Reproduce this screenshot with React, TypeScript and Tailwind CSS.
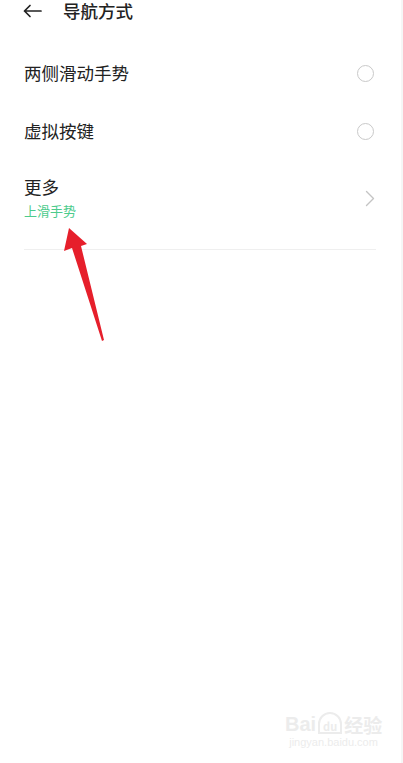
import React from "react";

const FONT = { fontFamily: '"Noto Sans CJK SC", "Noto Sans", sans-serif' };

function Radio() {
  return <span className="mr-[2px] block h-[17px] w-[17px] rounded-full border-[1.5px] border-[#c9c9c9]" />;
}

function Row({ label }: { label: string }) {
  return (
    <div className="flex h-[58px] items-center justify-between">
      <span className="text-[17.5px] leading-[22px] text-[#222]">{label}</span>
      <Radio />
    </div>
  );
}

export default function App() {
  return (
    <div className="relative h-[763px] w-full overflow-hidden bg-white border-r-2 border-[#f6f6f6]" style={FONT}>
      {/* header */}
      <div className="flex h-[22px] items-center pl-[23px]">
        <svg width="19" height="14" viewBox="0 0 19 14" fill="none" stroke="#222" strokeWidth="1.7" strokeLinecap="round" strokeLinejoin="round">
          <path d="M18 7H1.5M7 1.5L1.5 7L7 12.5" />
        </svg>
        <span className="ml-[21px] text-[17.5px] font-medium leading-[22px] text-[#222]">导航方式</span>
      </div>

      {/* list */}
      <div className="mt-[22px] ml-[24px] mr-[25px]">
        <Row label="两侧滑动手势" />
        <Row label="虚拟按键" />
        <div className="flex items-center justify-between border-b border-[#efefef] pt-[16px] pb-[29px]">
          <div className="flex flex-col">
            <span className="text-[17.5px] leading-[22px] text-[#222]">更多</span>
            <span className="mt-[4px] text-[13px] leading-[18px] text-[#4ccb8c]">上滑手势</span>
          </div>
          <svg width="10" height="17" viewBox="0 0 10 17" fill="none" stroke="#c4c4c4" strokeWidth="1.4" strokeLinecap="round" strokeLinejoin="round" className="mr-[1px]">
            <path d="M1.5 1.5L8.5 8.5L1.5 15.5" />
          </svg>
        </div>
      </div>

      {/* annotation arrow */}
      <svg className="absolute left-0 top-0" width="403" height="763" viewBox="0 0 403 763">
        <polygon points="69,228 64,251 72,248 102,341 104,340 81,246 87,244" fill="#e61f2b" />
      </svg>

      {/* watermark */}
      <div className="absolute left-[285px] top-[712px] flex flex-col items-center text-[#ececec]">
        <div className="flex items-end gap-[2px] leading-none">
          <span className="text-[20px] font-bold" style={{ fontFamily: '"Liberation Sans", sans-serif' }}>Bai</span>
          <span className="flex h-[22px] w-[24px] items-end justify-center rounded-t-full border-2 border-[#ececec] text-[11px] font-bold">du</span>
          <span className="text-[19px] font-bold">经验</span>
        </div>
        <span className="mt-[3px] text-[11px] leading-none" style={{ fontFamily: '"Liberation Sans", sans-serif' }}>jingyan.baidu.com</span>
      </div>
    </div>
  );
}
